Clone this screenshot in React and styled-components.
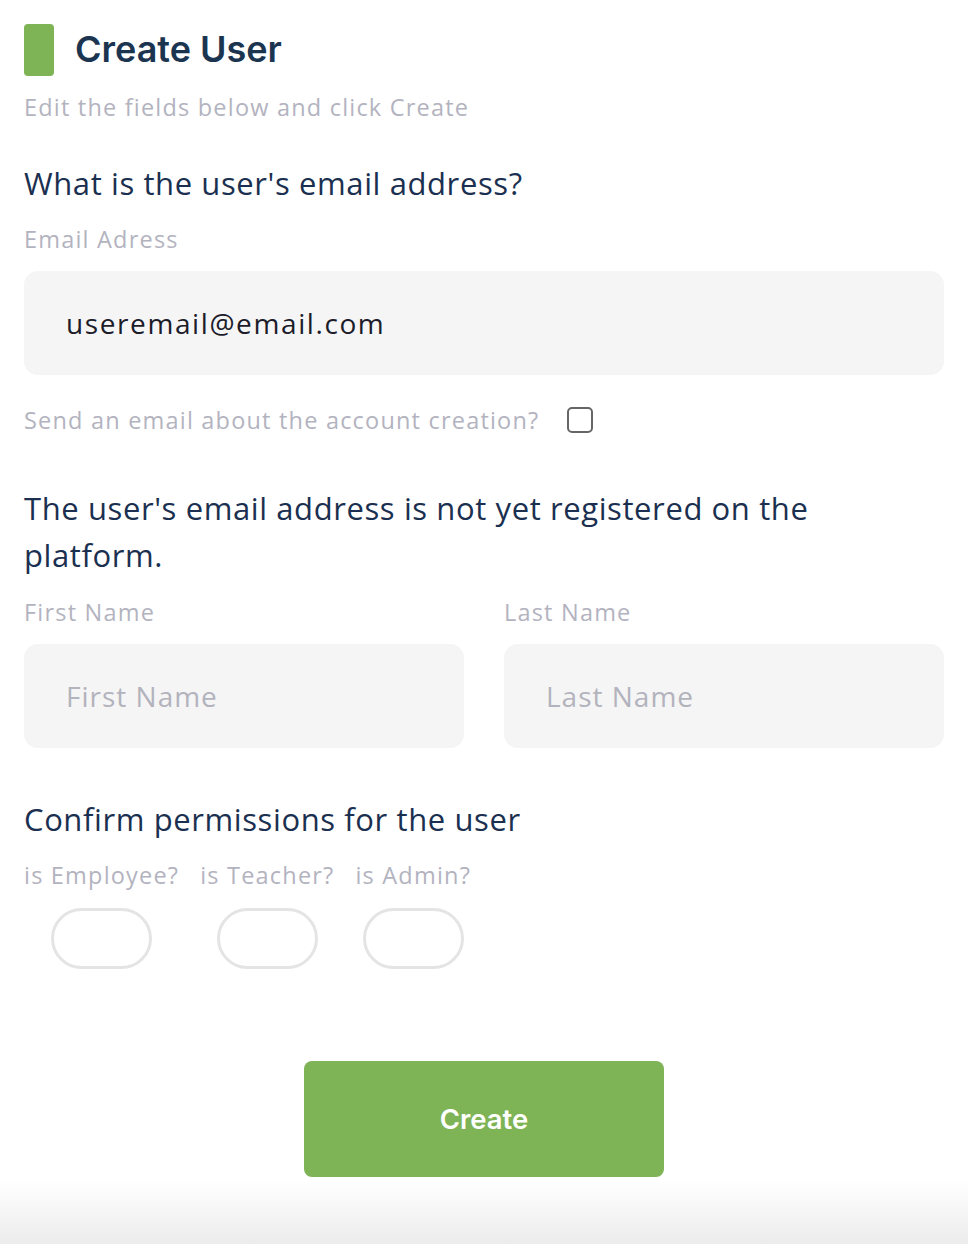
import React from "react";
import styled, { createGlobalStyle } from "styled-components";

const GlobalStyle = createGlobalStyle`
  * { box-sizing: border-box; }
  body {
    margin: 0;
    background: #fff;
    font-family: "Open Sans", "Liberation Sans", sans-serif;
  }
`;

const Page = styled.div`
  width: 968px;
  min-height: 1244px;
  display: flex;
  flex-direction: column;
  background: linear-gradient(to bottom, #fff 0, #fff 1180px, #ececec 1244px);
`;

const Form = styled.div`
  padding: 24px 24px 0;
  display: flex;
  flex-direction: column;
`;

const TitleRow = styled.div`
  display: flex;
  align-items: center;
  gap: 21px;
`;

const Marker = styled.div`
  width: 30px;
  height: 52px;
  border-radius: 4px;
  background: #7eb356;
`;

const Title = styled.h1`
  margin: 0 0 2px;
  font-family: Inter, "Liberation Sans", sans-serif;
  font-size: 36px;
  font-weight: 600;
  color: #1b3551;
`;

const Muted = styled.div`
  font-size: 23.5px;
  letter-spacing: 1.2px;
  color: #b3b3c0;
  margin-top: ${p => p.mt || 0}px;
  line-height: 30px;
  white-space: nowrap;
`;

const Heading = styled.h2`
  margin: ${p => p.mt || 0}px 0 0;
  font-size: 31px;
  font-weight: 400;
  letter-spacing: 0.6px;
  line-height: 47px;
  color: #1b3050;
  max-width: 830px;
`;

const Input = styled.input`
  display: block;
  width: 100%;
  height: 104px;
  border: none;
  border-radius: 14px;
  background: #f5f5f5;
  padding: 0 42px;
  font-family: inherit;
  font-size: 28px;
  letter-spacing: ${p => (p.placeholder ? 1 : 1.6)}px;
  color: #1c1c2a;
  outline: none;
  &::placeholder { color: #b3b3bd; }
`;

const InputBox = styled.div`
  margin-top: 17px;
`;

const CheckRow = styled.label`
  display: flex;
  align-items: center;
  gap: 28px;
  margin-top: 30px;
`;

const Box = styled.span`
  width: 26px;
  height: 26px;
  border: 2px solid #666;
  border-radius: 5px;
`;

const TwoCols = styled.div`
  display: grid;
  grid-template-columns: 1fr 1fr;
  column-gap: 40px;
  margin-top: 18px;
`;

const Field = styled.div`
  display: flex;
  flex-direction: column;
  gap: 17px;
`;

const Perms = styled.div`
  display: flex;
  gap: 21px;
  margin-top: 17px;
`;

const Perm = styled.div`
  display: flex;
  flex-direction: column;
  align-items: center;
  gap: 18px;
`;

const Toggle = styled.div`
  width: 101px;
  height: 61px;
  border: 3px solid #e4e4e4;
  border-radius: 31px;
  background: #fff;
`;

const ButtonWrap = styled.div`
  display: flex;
  justify-content: center;
  margin-top: 92px;
`;

const Button = styled.button`
  width: 360px;
  height: 116px;
  border: none;
  border-radius: 8px;
  background: #7eb356;
  color: #fff;
  font-family: Inter, "Liberation Sans", sans-serif;
  font-size: 27.5px;
  font-weight: 600;
`;

export default function App() {
  return (
    <Page>
      <GlobalStyle />
      <Form>
        <TitleRow>
          <Marker />
          <Title>Create User</Title>
        </TitleRow>
        <Muted mt={16}>Edit the fields below and click Create</Muted>

        <Heading mt={38}>What is the user's email address?</Heading>
        <Muted mt={17}>Email Adress</Muted>
        <InputBox>
          <Input defaultValue="useremail@email.com" />
        </InputBox>
        <CheckRow>
          <Muted>Send an email about the account creation?</Muted>
          <Box />
        </CheckRow>

        <Heading mt={50}>
          The user's email address is not yet registered on the platform.
        </Heading>
        <TwoCols>
          <Field>
            <Muted>First Name</Muted>
            <Input placeholder="First Name" />
          </Field>
          <Field>
            <Muted>Last Name</Muted>
            <Input placeholder="Last Name" />
          </Field>
        </TwoCols>

        <Heading mt={48}>Confirm permissions for the user</Heading>
        <Perms>
          {["is Employee?", "is Teacher?", "is Admin?"].map(p => (
            <Perm key={p}>
              <Muted>{p}</Muted>
              <Toggle />
            </Perm>
          ))}
        </Perms>

        <ButtonWrap>
          <Button>Create</Button>
        </ButtonWrap>
      </Form>
    </Page>
  );
}
